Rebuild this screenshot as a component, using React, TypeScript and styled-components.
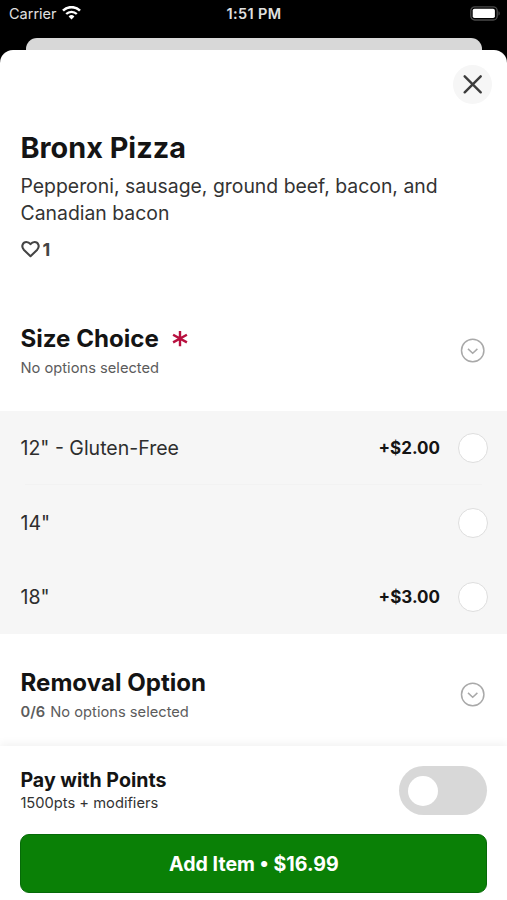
import React, { useState } from "react";
import styled, { createGlobalStyle } from "styled-components";

export interface optionData {
  id: string;
  label: string;
  price?: string;
}

const SIZE_OPTIONS: optionData[] = [
  { id: "s12", label: '12" - Gluten-Free', price: "+$2.00" },
  { id: "s14", label: '14"' },
  { id: "s18", label: '18"', price: "+$3.00" },
];

const ChevronIcon = () => (
  <svg width="26" height="26" viewBox="0 0 26 26" fill="none" stroke="#a9a9a9">
    <circle cx="12.7" cy="12.5" r="11.2" strokeWidth="1.5" />
    <path d="M8 10.9l4.7 4.4 4.7-4.4" strokeWidth="1.5" />
  </svg>
);

const App = () => {
  const [selected, setSelected] = useState("");
  const [payWithPoints, setPayWithPoints] = useState(false);

  return (
    <Screen>
      <GlobalStyle />
      <StatusBar>
        <Carrier>
          <span>Carrier</span>
          <svg width="19" height="14" viewBox="0 0 19 14" fill="none" stroke="#fff">
            <path d="M1 4.7a12 12 0 0 1 17 0" strokeWidth="2.6" />
            <path d="M4.2 8a7.5 7.5 0 0 1 10.6 0" strokeWidth="2.3" />
            <path d="M9.5 13.4l-2.9-2.9a4.1 4.1 0 0 1 5.8 0z" fill="#fff" stroke="none" />
          </svg>
        </Carrier>
        <Time>1:51 PM</Time>
        <Battery>
          <svg width="31" height="15" viewBox="0 0 31 15">
            <rect x="0.8" y="0.8" width="26.4" height="13.2" rx="4" fill="none" stroke="#4a4a4a" strokeWidth="1.3" />
            <rect x="2.7" y="2.7" width="22.2" height="9.4" rx="1.8" fill="#fff" />
            <path d="M28.5 5.2c1.6.6 1.6 3.8 0 4.4z" fill="#4a4a4a" />
          </svg>
        </Battery>
      </StatusBar>
      <BackSheet />
      <Sheet>
        <CloseRow>
          <CloseButton aria-label="Close">
            <svg width="20" height="20" viewBox="0 0 20 20" stroke="#3c3c3c" strokeWidth="2.4" strokeLinecap="round">
              <path d="M1.7 1.3l16 16M17.7 1.3l-16 16" />
            </svg>
          </CloseButton>
        </CloseRow>
        <ItemInfo>
          <h1>Bronx Pizza</h1>
          <p>Pepperoni, sausage, ground beef, bacon, and Canadian bacon</p>
          <Likes>
            <svg width="19" height="18" viewBox="0 0 19 18" fill="none" stroke="#444" strokeWidth="2.1" strokeLinejoin="round">
              <path d="M9.5 16.2L3 10C-.4 6.3 2 2 5.4 2c1.8 0 3.2 1 4.1 2.2C10.4 3 11.8 2 13.6 2 17 2 19.4 6.3 16 10z" />
            </svg>
            <span>1</span>
          </Likes>
        </ItemInfo>
        <GroupHeader>
          <div>
            <GroupTitle>
              Size Choice
              <svg width="16" height="16" viewBox="0 0 16 16" stroke="#b8103f" strokeWidth="2.4">
                <path d="M8 0v15.2M1.1 3.8l13.8 7.6M14.9 3.8L1.1 11.4" />
              </svg>
            </GroupTitle>
            <GroupHint>No options selected</GroupHint>
          </div>
          <ChevronIcon />
        </GroupHeader>
        <Options>
          {SIZE_OPTIONS.map((data: optionData) => (
            <Option key={data.id} onClick={() => setSelected(data.id)}>
              <OptionLabel>{data.label}</OptionLabel>
              {data.price && <Price>{data.price}</Price>}
              <Radio $checked={selected === data.id} />
            </Option>
          ))}
        </Options>
        <GroupHeader $tall>
          <div>
            <GroupTitle>Removal Option</GroupTitle>
            <GroupHint>
              <b>0/6</b> No options selected
            </GroupHint>
          </div>
          <ChevronIcon />
        </GroupHeader>
      </Sheet>
      <Footer>
        <PointsRow>
          <div>
            <PointsTitle>Pay with Points</PointsTitle>
            <PointsHint>1500pts + modifiers</PointsHint>
          </div>
          <Toggle
            role="switch"
            aria-checked={payWithPoints}
            $on={payWithPoints}
            onClick={() => setPayWithPoints(!payWithPoints)}
          />
        </PointsRow>
        <AddButton>Add Item • $16.99</AddButton>
      </Footer>
    </Screen>
  );
};

const GlobalStyle = createGlobalStyle`
  * {
    box-sizing: border-box;
  }

  body {
    margin: 0;
    background: #000;
    font-family: Inter, "Liberation Sans", sans-serif;
  }

  h1, h2, h3, p {
    margin: 0;
  }

  button {
    border: 0;
    padding: 0;
    font-family: inherit;
    cursor: pointer;
  }

  svg {
    display: block;
    flex-shrink: 0;
  }
`;

const Screen = styled.div`
  display: flex;
  flex-direction: column;
  width: 507px;
  height: 900px;
  overflow: hidden;
  background: #000;
`;

const StatusBar = styled.div`
  display: grid;
  grid-template-columns: 1fr auto 1fr;
  align-items: center;
  flex-shrink: 0;
  height: 26px;
  margin-bottom: 12px;
  padding: 0 6px 0 9px;
  color: #e0e0e0;
  font-size: 14.5px;
`;

const Carrier = styled.div`
  display: flex;
  align-items: center;
  gap: 5px;
`;

const Time = styled.div`
  margin-right: 2px;
  font-weight: 600;
  letter-spacing: 0.4px;
`;

const Battery = styled.div`
  justify-self: end;
`;

const BackSheet = styled.div`
  flex-shrink: 0;
  height: 12px;
  margin: 0 25px 0 26px;
  border-radius: 11px 11px 0 0;
  background: #d8d8d8;
`;

const Sheet = styled.main`
  flex: 1;
  min-height: 0;
  overflow: hidden;
  border-radius: 13px 13px 0 0;
  background: #fff;
`;

const CloseRow = styled.div`
  display: flex;
  justify-content: flex-end;
  padding: 15px 15px 0;
`;

const CloseButton = styled.button`
  display: flex;
  align-items: center;
  justify-content: center;
  width: 39px;
  height: 39px;
  border-radius: 50%;
  background: #f6f6f6;
`;

const ItemInfo = styled.section`
  padding: 27px 20.5px 32px;

  h1 {
    color: #141414;
    font-weight: 700;
    font-size: 28.8px;
    line-height: 34px;
  }

  p {
    margin-top: 8px;
    color: #333;
    font-size: 19.4px;
    line-height: 27px;
  }
`;

const Likes = styled.div`
  display: flex;
  align-items: center;
  gap: 3px;
  height: 20px;
  margin-top: 12px;
  color: #444;
  font-weight: 700;
  font-size: 18px;
`;

const GroupHeader = styled.header<{ $tall?: boolean }>`
  display: flex;
  align-items: center;
  justify-content: space-between;
  height: ${({ $tall }) => ($tall ? "122px" : "120px")};
  padding: 0 21px 0 20.5px;

  > svg {
    margin-right: 0.5px;
  }
`;

const GroupTitle = styled.h2`
  display: flex;
  align-items: center;
  gap: 13px;
  color: #141414;
  font-weight: 700;
  font-size: 24.1px;
  line-height: 30px;
`;

const GroupHint = styled.p`
  margin-top: 4px;
  color: #5c5c5c;
  font-size: 14.7px;
  line-height: 20px;

  b {
    margin-right: 1px;
    font-weight: 600;
  }
`;

const Options = styled.ul`
  margin: 0;
  padding: 0;
  list-style: none;
  background: #f6f6f6;
`;

const Option = styled.li`
  display: flex;
  align-items: center;
  height: 74.4px;
  padding: 0 19.5px 0 20.5px;
  cursor: pointer;

  &:first-child {
    background: linear-gradient(#f2f2f2, #f2f2f2) center bottom / calc(100% - 50px) 1px no-repeat;
  }
`;

const OptionLabel = styled.span`
  flex: 1;
  padding-top: 0.5px;
  color: #2e2e2e;
  font-size: 19.5px;
`;

const Price = styled.span`
  margin-right: 17.5px;
  padding-top: 0.5px;
  color: #141414;
  font-weight: 700;
  font-size: 17px;
`;

const Radio = styled.span<{ $checked: boolean }>`
  width: 30px;
  height: 30px;
  border: ${({ $checked }) => ($checked ? "8px solid #0a8006" : "1px solid #dedede")};
  border-radius: 50%;
  background: #fff;
`;

const Footer = styled.footer`
  position: relative;
  flex-shrink: 0;
  height: 154px;
  padding: 20px 19.6px 0 20.4px;
  background: #fff;
  box-shadow: 0 -3px 8px rgba(0, 0, 0, 0.05);
`;

const PointsRow = styled.div`
  display: flex;
  align-items: center;
  justify-content: space-between;
  height: 49px;
`;

const PointsTitle = styled.h3`
  color: #141414;
  font-weight: 700;
  font-size: 19.6px;
  line-height: 26px;
`;

const PointsHint = styled.p`
  padding-bottom: 2px;
  color: #333;
  font-size: 14.7px;
  line-height: 20px;
`;

const Toggle = styled.button<{ $on: boolean }>`
  display: flex;
  align-items: center;
  justify-content: ${({ $on }) => ($on ? "flex-end" : "flex-start")};
  width: 88px;
  height: 49px;
  padding: 0 9px;
  border-radius: 25px;
  background: ${({ $on }) => ($on ? "#0a8006" : "#d8d8d8")};

  &::before {
    content: "";
    width: 30px;
    height: 30px;
    border-radius: 50%;
    background: #fff;
  }
`;

const AddButton = styled.button`
  display: block;
  width: 100%;
  height: 59px;
  margin-top: 19px;
  border: 1px solid #066a08;
  border-radius: 9px;
  background: #0a8006;
  color: #fff;
  font-weight: 700;
  font-size: 19.6px;
`;

export default App;
